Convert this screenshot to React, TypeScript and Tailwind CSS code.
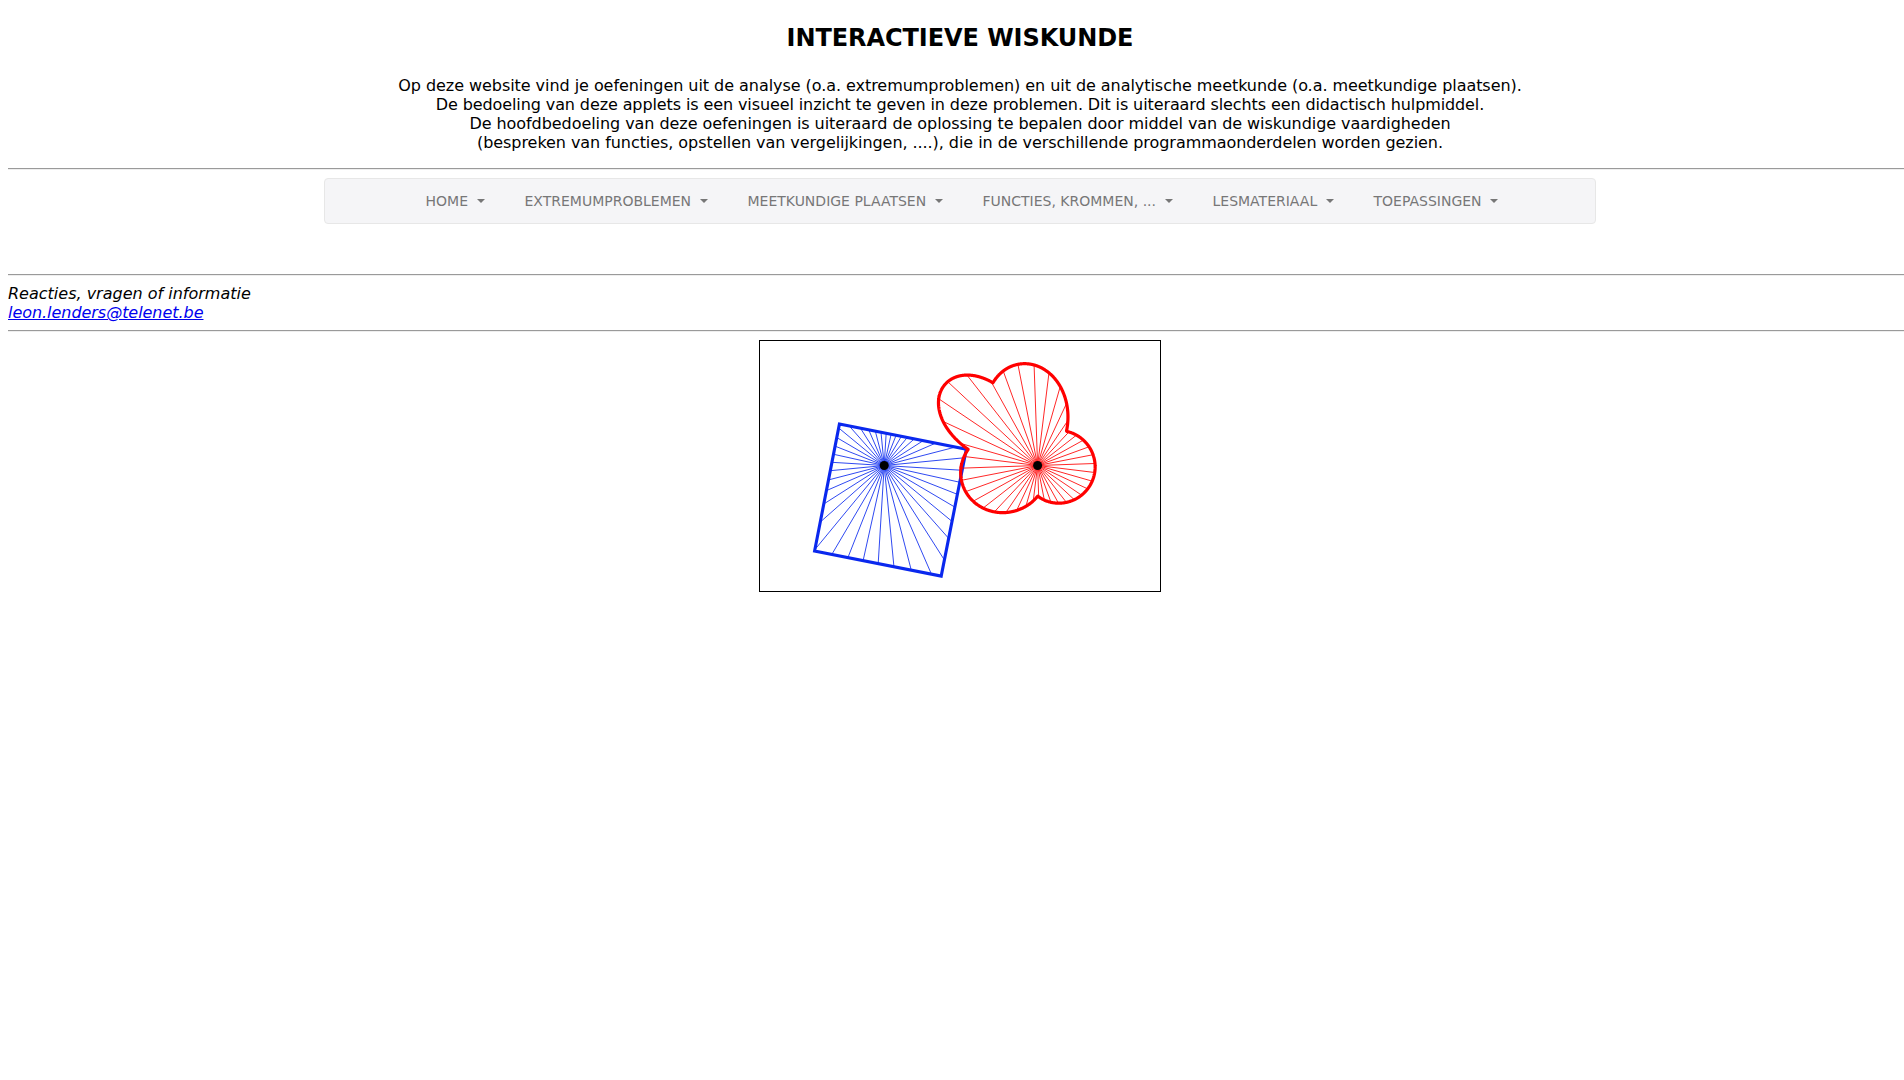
const menu = [
  { label: "HOME", width: "w-[99px]" },
  { label: "EXTREMUMPROBLEMEN", width: "w-[223px]" },
  { label: "MEETKUNDIGE PLAATSEN", width: "w-[235px]" },
  { label: "FUNCTIES, KROMMEN, ...", width: "w-[230px]" },
  { label: "LESMATERIAAL", width: "w-[161px]" },
  { label: "TOEPASSINGEN", width: "w-[164px]" },
];

type Point = [number, number];

const RAD = Math.PI / 180;
const blueCenter: Point = [124.2, 124.5];
const redCenter: Point = [277.6, 124.5];
const corners: Point[] = [
  [79.4, 83.1],
  [206.3, 108.2],
  [181.2, 235.1],
  [54.6, 210],
];

// Distance from the blue pivot to the square's edge in direction a (degrees).
function radius(a: number): number {
  const dx = Math.cos(a * RAD);
  const dy = Math.sin(a * RAD);
  let best = 1000;
  corners.forEach(([x1, y1], i) => {
    const [x2, y2] = corners[(i + 1) % 4];
    const ex = x2 - x1;
    const ey = y2 - y1;
    const px = x1 - blueCenter[0];
    const py = y1 - blueCenter[1];
    const t = (px * ey - py * ex) / (dx * ey - dy * ex);
    if (t > 0 && t < best) best = t;
  });
  return best;
}

// Angle table of the conjugate gear rolling on the square for pivot distance d.
const STEP = 0.25;
function roll(d: number): number[] {
  const out = [0];
  for (let i = 0; i < 360 / STEP; i++) {
    const r = radius((i + 0.5) * STEP);
    out.push(out[i] + (r / (d - r)) * STEP);
  }
  return out;
}

let lo = 135;
let hi = 190;
for (let i = 0; i < 30; i++) {
  const mid = (lo + hi) / 2;
  const turn = roll(mid);
  if (turn[turn.length - 1] > 360) lo = mid;
  else hi = mid;
}
const table = roll(lo);

// Angle on the red gear that meets the blue gear's zero direction.
const CONTACT = 180.7;

const polar = (c: Point, r: number, a: number): Point => [c[0] + r * Math.cos(a * RAD), c[1] + r * Math.sin(a * RAD)];

// Point of the red gear's edge in direction a (degrees).
function redEdge(a: number): Point {
  const turned = (CONTACT - a + 360) % 360;
  const i = Math.max(1, table.findIndex((v) => v >= turned));
  const f = (turned - table[i - 1]) / (table[i] - table[i - 1]);
  return polar(redCenter, lo - radius((i - 1 + f) * STEP), a);
}

const fmt = (p: Point) => p[0].toFixed(2) + "," + p[1].toFixed(2);
const outline = table
  .slice(0, -1)
  .map((v, i) => fmt(polar(redCenter, lo - radius(i * STEP), CONTACT - v)))
  .join(" ");
const steps = Array.from({ length: 40 }, (_, k) => k * 9);

function Ray({ from, to }: { from: Point; to: Point }) {
  return <line x1={from[0]} y1={from[1]} x2={to[0]} y2={to[1]} />;
}

function Gears() {
  return (
    <svg width="402" height="252" viewBox="0 0 400 250" className="block border border-black">
      <g stroke="#0a28ee" strokeWidth="0.85">
        {steps.map((a) => (
          <Ray key={a} from={blueCenter} to={polar(blueCenter, radius(a + 3.5), a + 3.5)} />
        ))}
      </g>
      <polygon points={corners.map(fmt).join(" ")} fill="none" stroke="#0a28ee" strokeWidth="3.1" />
      <g stroke="#ff0000" strokeWidth="0.85">
        {steps.map((a) => (
          <Ray key={a} from={redCenter} to={redEdge(a + 7)} />
        ))}
      </g>
      <polygon points={outline} fill="none" stroke="#ff0000" strokeWidth="3.2" strokeLinejoin="round" />
      <circle cx={blueCenter[0]} cy={blueCenter[1]} r="4.5" />
      <circle cx={redCenter[0]} cy={redCenter[1]} r="4.5" />
    </svg>
  );
}

function Rule() {
  return <hr className="h-0.5 border-t border-b border-t-[#9a9a9a] border-b-[#eeeeee]" />;
}

export default function App() {
  return (
    <div className="h-screen overflow-hidden bg-white pl-2 pt-6 font-['DejaVu_Sans',sans-serif] text-base leading-[19px] text-black">
      <div className="w-[1904px]">
        <h2 className="mb-6 text-center text-2xl leading-7 font-bold tracking-[-0.07px]">INTERACTIEVE WISKUNDE</h2>
        <p className="mb-4 text-center">
          <span className="tracking-[-0.052px]">
            Op deze website vind je oefeningen uit de analyse (o.a. extremumproblemen) en uit de analytische meetkunde (o.a. meetkundige plaatsen).
          </span>
          <br />
          <span className="tracking-[-0.104px]">
            De bedoeling van deze applets is een visueel inzicht te geven in deze problemen. Dit is uiteraard slechts een didactisch hulpmiddel.
          </span>
          <br />
          <span className="tracking-[-0.058px]">
            De hoofdbedoeling van deze oefeningen is uiteraard de oplossing te bepalen door middel van de wiskundige vaardigheden
          </span>
          <br />
          <span className="tracking-[-0.06px]">
            (bespreken van functies, opstellen van vergelijkingen, ....), die in de verschillende programmaonderdelen worden gezien.
          </span>
        </p>
        <Rule />
        <nav className="mx-auto mt-2 mb-[50px] flex h-[46px] w-[1272px] items-center rounded border border-[#e7e7e7] bg-[#f5f5f7] pl-[100.5px] text-sm leading-5 text-[#777777]">
          {menu.map(({ label, width }) => (
            <a key={label} href="#" className={"flex items-center justify-between pr-[39.5px] whitespace-nowrap " + width}>
              {label}
              <span className="border-x-4 border-t-4 border-x-transparent border-t-[#777777]" />
            </a>
          ))}
        </nav>
        <Rule />
        <address className="my-2 italic">
          Reacties, vragen of informatie
          <br />
          <a href="mailto:leon.lenders@telenet.be" className="tracking-[-0.04px] text-[#0000ee] underline">
            leon.lenders@telenet.be
          </a>
        </address>
        <Rule />
        <div className="mt-2 flex justify-center">
          <Gears />
        </div>
      </div>
    </div>
  );
}
